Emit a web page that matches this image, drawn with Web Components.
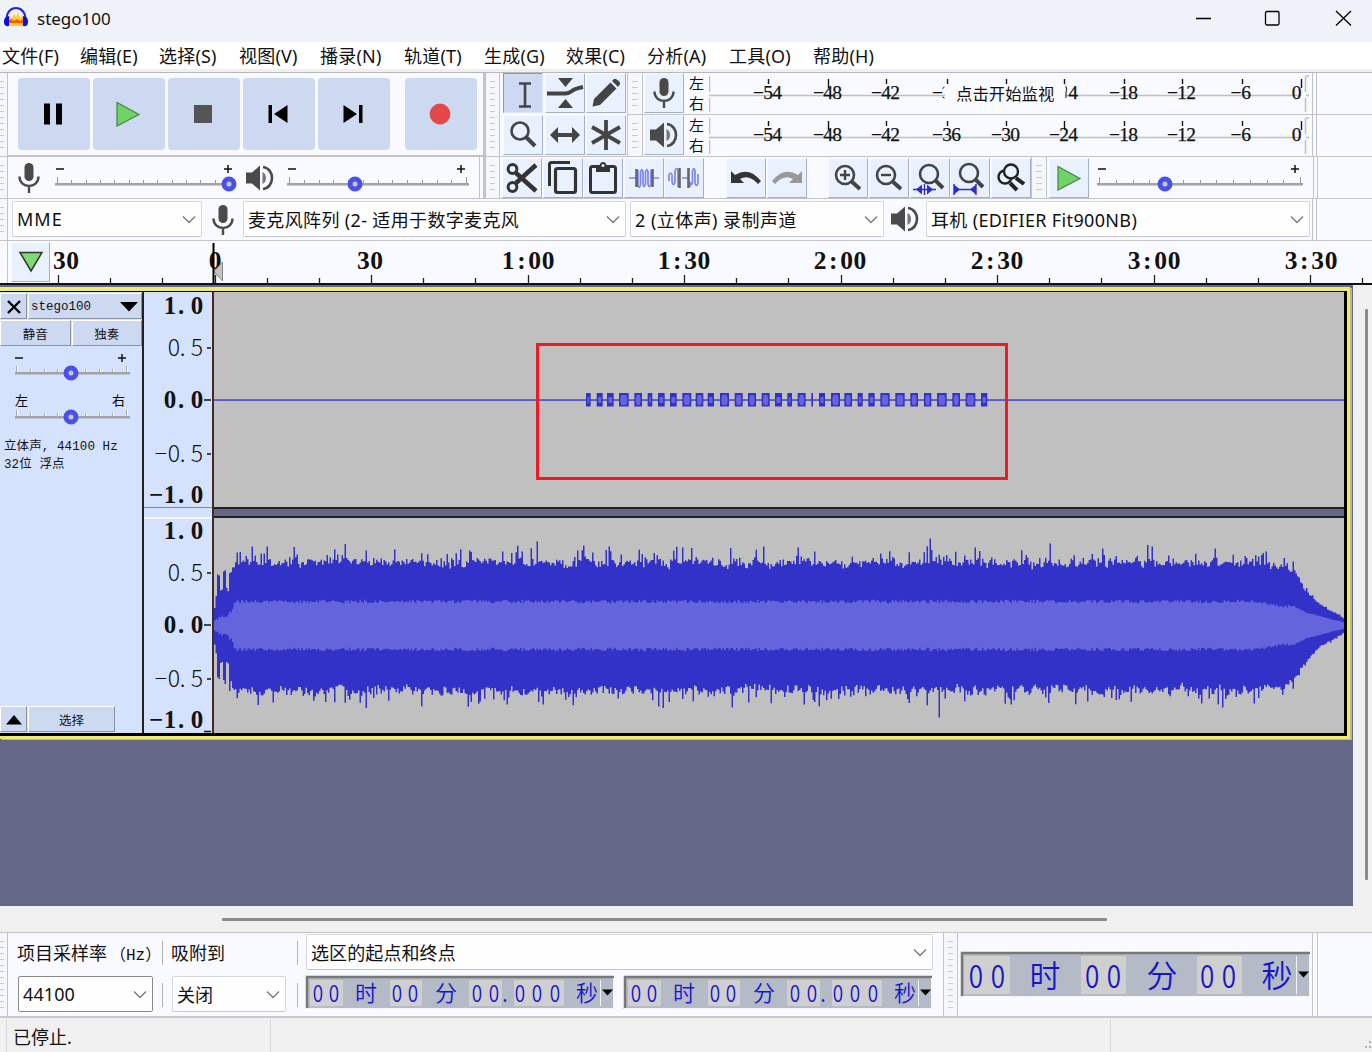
<!DOCTYPE html>
<html lang="zh-CN">
<head>
<meta charset="utf-8">
<title>stego100</title>
<style>
  html, body {
    margin: 0;
    width: 1372px;
    height: 1052px;
    overflow: hidden;
  }
  body {
    font-family: "Noto Sans", "Noto Sans CJK SC", sans-serif;
    font-size: 18px;
    color: #111;
  }
</style>
</head>
<body>
<audio-window></audio-window>

<script>
const SERIF = '"Liberation Serif", "Noto Sans CJK SC", serif';
const LIGHT = '"Noto Sans CJK SC", sans-serif';

// one x position per character, like a fixed-width bitmap font
function cells(text, xs, y, attrs = '') {
  return `<text x="${xs.join(' ')}" y="${y}" text-anchor="middle" ${attrs}>${text}</text>`;
}

function run(text, center, step) {
  const first = center - (text.length - 1) * step / 2;
  return [...text].map((c, i) => +(first + i * step).toFixed(1));
}

const lens = (x, y, r, tail) => `
  <circle cx="${x}" cy="${y}" r="${r}" fill="none" stroke="#444" stroke-width="2.6"/>
  <path d="M${x + r * 0.7} ${y + r * 0.7}L${tail}" stroke="#444" stroke-width="4"/>`;

const ICONS = {
  logo: [26, 24, `
    <path d="M5 20V13L7 10L9 13L11 7L13 11L15 6L17 12L19 9L21 13V20Z" fill="#fc3"/>
    <path d="M5 15L8 13L11 15L14 13L17 15L20 13V17H5Z" fill="#f50"/>
    <path d="M3.5 14C3 -2 23 -2 22.500 14" fill="none" stroke="#2222e8" stroke-width="2"/>
    <path d="M6 10V20C1 21 1 17 1 15Q1 11 6 10ZM20 10V20C25 21 25 17 25 15Q25 11 20 10Z" fill="#0a0aee"/>`],
  pause: [24, 24, '<path d="M3 1.500H9V22.500H3ZM15 1.500H21V22.500H15Z" fill="#000"/>'],
  play: [26, 26, '<path d="M2 1.500L24 13.500L2 25Z" fill="#6fd466" stroke="#4c7f49" stroke-width="1.200"/>'],
  stop: [20, 20, '<path d="M1 1H19V19H1Z" fill="#555"/>'],
  start: [22, 22, '<path d="M1.500 2H5V20H1.500ZM20.500 2V20L7 11Z" fill="#000"/>'],
  end: [22, 22, '<path d="M17 2H20.500V20H17ZM1.500 2V20L15 11Z" fill="#000"/>'],
  record: [22, 22, '<circle cx="11" cy="11" r="10.400" fill="#e34848"/>'],
  mic: [24, 32, `
    <rect x="7.500" y="1" width="9" height="18" rx="4.500" fill="#4a4a4a"/>
    <path d="M2.500 14.500C2.500 27 21.500 27 21.500 14.500M12 24V31" fill="none" stroke="#4a4a4a" stroke-width="2.400"/>`],
  speaker: [30, 28, `
    <path d="M1 8.500H7L15 1.500V26.500L7 19.500H1Z" fill="#4a4a4a"/>
    <path d="M17.500 8V20Q21 18.500 21 14T17.500 8Z" fill="#777"/>
    <path d="M18 3C30 4.500 30 23.500 18 25" fill="none" stroke="#4a4a4a" stroke-width="2.600"/>`],
  ibeam: [16, 28, '<path d="M2 2.500H14M2 25.500H14M8 2.500V25.500" fill="none" stroke="#444" stroke-width="2.600"/>'],
  envelope: [38, 32, `
    <path d="M12 1H27L19.500 10ZM12 31H27L19.500 22Z" fill="#444"/>
    <path d="M1 16.500H19Q23 16.500 26 14T37 10" fill="none" stroke="#444" stroke-width="4"/>`],
  pencil: [30, 30, '<path d="M1.500 28.500L3 21L19.500 4.500L25.500 10.500L9 27ZM21 3L23 1Q25 0 29 4.500Q29.500 6 27 9Z" fill="#444"/>'],
  lens: [28, 28, '<circle cx="11" cy="10" r="8.500" fill="none" stroke="#444" stroke-width="2.600"/><path d="M17 16L26 25" stroke="#444" stroke-width="4"/>'],
  shift: [32, 18, '<path d="M1 9L9 1V7H23V1L31 9L23 17V11H9V17Z" fill="#444"/>'],
  star: [32, 32, '<path d="M16 1V31M2 8L30 24M30 8L2 24" stroke="#444" stroke-width="3.800"/>'],
  cut: [32, 32, `
    <path d="M10 11L30 29M10 21L30 3" stroke="#333" stroke-width="4.500"/>
    <circle cx="6.500" cy="7" r="4.400" fill="none" stroke="#333" stroke-width="3"/>
    <circle cx="6.500" cy="25" r="4.400" fill="none" stroke="#333" stroke-width="3"/>`],
  copy: [32, 34, `
    <rect x="8.500" y="7.500" width="20" height="24" rx="2" fill="none" stroke="#333" stroke-width="3.200"/>
    <path d="M2.500 25V3.500Q2.500 1.500 4.500 1.500H23" fill="none" stroke="#333" stroke-width="3"/>`],
  paste: [30, 34, `
    <rect x="2.500" y="5.500" width="25" height="26" rx="2" fill="none" stroke="#333" stroke-width="3"/>
    <path d="M8 5H11.500Q12 1 15 1T18.500 5H22V11H8Z" fill="#333"/><circle cx="15" cy="4.500" r="1.500" fill="#eaf1fe"/>`],
  trim: [30, 22, `
    <path d="M0 11H7M24 11H30M9 3V19Q11 22 11.500 17V5Q13 0 14 5V17Q15 22 16.500 17V5Q18 0 19 5V17Q20 22 22 17V3" fill="none" stroke="#7d87ea" stroke-width="1.700"/>
    <path d="M7.500 2V20M23.500 2V20" stroke="#666" stroke-width="2.600"/>`],
  silence: [32, 24, `
    <path d="M1 15V9Q2.500 5 4 9V16Q5.500 21 7 16V5Q8.500 0 10 5V21M14 12H20M22 21V16Q23.500 21 24.500 16V5Q26 0 27 5V17Q28.500 22 30 17V8" fill="none" stroke="#7d87ea" stroke-width="1.700"/>
    <path d="M11.500 2V22M20.500 2V22" stroke="#666" stroke-width="2.600"/>`],
  undo: [32, 18, '<path d="M1 2L5 6Q19 -3 31 12L28 15Q19 5 10 10L14 14H1Z" fill="#333"/>'],
  redo: [32, 18, '<path d="M31 2L27 6Q13 -3 1 12L4 15Q13 5 22 10L18 14H31Z" fill="#999"/>'],
  zoomin: [30, 28, lens(12, 11, 9, '27 25') + '<path d="M7 11H17M12 6V16" stroke="#444" stroke-width="2.400"/>'],
  zoomout: [30, 28, lens(12, 11, 9, '27 25') + '<path d="M7 11H17" stroke="#444" stroke-width="2.400"/>'],
  zoomsel: [36, 34, lens(17, 13, 9, '31 27') + '<path d="M1 28.500H24M12.500 23V34" stroke="#2c2ccc" stroke-width="1.400"/><path d="M4 28.500L10 23.500V33.500ZM21 28.500L15 23.500V33.500Z" fill="#2c2ccc"/>'],
  zoomfit: [36, 34, lens(17, 12, 9, '31 26') + '<path d="M2 28.500H24M2 23V34M24 23V34" stroke="#2c2ccc" stroke-width="1.400"/><path d="M8 28.500L2 23.500V33.500ZM18 28.500L24 23.500V33.500Z" fill="#2c2ccc"/>'],
  zoomtoggle: [30, 30, `
    <path d="M14 20L21 27M20 15L28 21" stroke="#222" stroke-width="4"/>
    <circle cx="9" cy="14" r="6.500" fill="none" stroke="#222" stroke-width="2.400"/>
    <circle cx="15" cy="8.500" r="7" fill="#eaf1fe" stroke="#222" stroke-width="2.400"/>`],
  pin: [26, 22, '<path d="M2 1.500H24L13 20Z" fill="#7ddb70" stroke="#333" stroke-width="1.500"/>'],
  close: [16, 16, '<path d="M2 2L14 14M14 2L2 14" stroke="#000" stroke-width="2.400"/>'],
  down: [18, 10, '<path d="M0 0H18L9 9.500Z" fill="#000"/>'],
  up: [16, 10, '<path d="M0 9.500H16L8 0Z" fill="#000"/>'],
  chevron: [14, 9, '<path d="M1 1.500L7 7.500L13 1.500" fill="none" stroke="#777" stroke-width="1.300"/>'],
};

class AudioIcon extends HTMLElement {
  connectedCallback() {
    const [w, h, body] = ICONS[this.getAttribute('name')];
    this.attachShadow({ mode: 'open' }).innerHTML = `
      <style>
        :host { display: block; flex: none; width: ${w}px; height: ${h}px; }
        svg { display: block; }
      </style>
      <svg width="${w}" height="${h}" viewBox="0 0 ${w} ${h}">${body}</svg>`;
  }
}
customElements.define('audio-icon', AudioIcon);

class TitleBar extends HTMLElement {
  connectedCallback() {
    this.attachShadow({ mode: 'open' }).innerHTML = `
      <style>
        :host {
          display: flex;
          align-items: center;
          box-sizing: border-box;
          height: 42px;
          padding: 0 20px 6px 3px;
          background: #f0f2f9;
          font-size: 17px;
        }
        .name { margin-left: 8px; flex: 1; }
        svg { display: block; }
      </style>
      <audio-icon name="logo"></audio-icon>
      <span class="name"><slot></slot></span>
      <svg width="156" height="16" fill="none" stroke="#000" stroke-width="1.300">
        <path d="M0 8.500H15M140 1L155 15.500M155 1L140 15.500"/>
        <rect x="69.500" y="1.500" width="13.500" height="13.500" rx="1.500"/>
      </svg>`;
  }
}
customElements.define('title-bar', TitleBar);

class MenuBar extends HTMLElement {
  connectedCallback() {
    const items = ['文件(F)', '编辑(E)', '选择(S)', '视图(V)', '播录(N)', '轨道(T)',
      '生成(G)', '效果(C)', '分析(A)', '工具(O)', '帮助(H)'];
    this.attachShadow({ mode: 'open' }).innerHTML = `
      <style>
        :host {
          display: grid;
          grid-template-columns: 78px 79px 80px 81px 84px 80px 82px 81px 82px 84px 80px;
          height: 27px;
          padding-left: 2px;
          background: #fff;
          border-bottom: 3px solid #f0f0f0;
          line-height: 28px;
          letter-spacing: .2px;
          white-space: nowrap;
        }
      </style>
      ${items.map(t => `<span>${t}</span>`).join('')}`;
  }
}
customElements.define('menu-bar', MenuBar);

class ToolGrip extends HTMLElement {
  connectedCallback() {
    this.attachShadow({ mode: 'open' }).innerHTML = `
      <style>
        :host {
          display: block;
          flex: none;
          box-sizing: border-box;
          width: 14px;
          padding: 8px 4px;
          background: #f6f7fb;
          border-right: 1px solid #c4c4c4;
        }
        :host([edge]) { width: 8px; padding-left: 0; padding-right: 3px; }
        div {
          height: 100%;
          background: repeating-linear-gradient(#c8cacc 0 1px, transparent 1px 6px);
        }
      </style>
      <div></div>`;
  }
}
customElements.define('tool-grip', ToolGrip);

class ToolButton extends HTMLElement {
  connectedCallback() {
    this.attachShadow({ mode: 'open' }).innerHTML = `
      <style>
        :host {
          display: flex;
          flex: none;
          align-items: center;
          justify-content: center;
          box-sizing: border-box;
          width: 40px;
          height: 40px;
          background: #eaf1fe;
          border: 1px solid;
          border-color: #f9faff #a3b0c9 #a3b0c9 #f9faff;
        }
        :host([pressed]) {
          padding: 3px 0 0 3px;
          background: #cdd9f1;
          border-color: #8c98b0 #dce6f8 #dce6f8 #8c98b0;
        }
        :host([big]) {
          width: 72px;
          height: 72px;
          padding-right: 2px;
          border: 0;
          border-radius: 4px;
          background: #cdd9f1;
        }
        :host([flat]) { background: #cdd9f1; width: auto; height: 26px; padding-top: 1px; border-color: #fff #8a92a3 #8a92a3 #fff; }
      </style>
      <slot></slot>`;
  }
}
customElements.define('tool-button', ToolButton);

class ComboBox extends HTMLElement {
  connectedCallback() {
    this.attachShadow({ mode: 'open' }).innerHTML = `
      <style>
        :host {
          display: flex;
          flex: none;
          align-items: center;
          justify-content: space-between;
          box-sizing: border-box;
          height: 36px;
          padding: 0 5px 0 4px;
          background: #fefefe;
          border: 1px solid #d5d7dc;
          border-bottom-color: #c3c5ca;
          border-radius: 2px;
          letter-spacing: var(--combo-spacing, .35px);
          white-space: nowrap;
        }
        :host([focused]) { border-color: #8b8b8b; }
      </style>
      <span><slot></slot></span>
      <audio-icon name="chevron"></audio-icon>`;
  }
}
customElements.define('combo-box', ComboBox);

class LevelSlider extends HTMLElement {
  connectedCallback() {
    const w = +this.getAttribute('width');
    const pos = +this.getAttribute('pos');
    const n = +this.getAttribute('ticks') || 13;
    const plus = +this.getAttribute('plus') || w - 8;
    const compact = this.hasAttribute('compact');
    const ends = this.getAttribute('ends');
    const color = compact ? '#fff' : '#999';
    let ticks = '';
    for (let i = 0; i < n; i++) {
      const x = Math.round(2 + i * (w - 5) / (n - 1)) + 0.5;
      const top = i === 0 || i === n - 1 ? 13 : 16;
      ticks += `<path d="M${x} ${top}V20" stroke="${color}"/>`;
      if (compact) ticks += `<path d="M${x - 1} ${top}V20" stroke="#aaa"/>`;
    }
    const marks = ends
      ? `<text x="0" y="8" font-size="13">${ends[0]}</text><text x="${w - 18}" y="8" font-size="13">${ends[1]}</text>`
      : `<path d="M${compact ? 0 : 1} 5H${compact ? 8 : 9}M${plus - 4} 5H${plus + 4}M${plus} 1V9" stroke="#111" stroke-width="1.500"/>`;
    this.attachShadow({ mode: 'open' }).innerHTML = `
      <style>
        :host { display: block; flex: none; width: ${w}px; height: 30px; }
        svg { display: block; overflow: visible; }
      </style>
      <svg width="${w}" height="30">
        ${marks}${ticks}
        <rect y="19" width="${w}" height="2.500" fill="#a2a2a2"/>
        <circle cx="${pos}" cy="20" r="5" fill="#ccc8c0" stroke="#4a50ee" stroke-width="5"/>
      </svg>`;
  }
}
customElements.define('level-slider', LevelSlider);

class MeterRuler extends HTMLElement {
  connectedCallback() {
    const tip = this.hasAttribute('tip');
    const marks = [[-54, 59], [-48, 119], [-42, 177], [-36, 238], [-30, 297],
      [-24, 355], [-18, 415], [-12, 473], [-6, 533], [0, 592]];
    const labels = marks.map(([v, x]) => {
      const tall = v === -48 || v === 0 || v === -24;
      let text = String(v).replace('-', '−');
      let xs = v === 0 ? [x - 4.5] : v === -6 ? [x - 6, x + 4] : [x - 9.5, x, x + 9];
      // the hint box hides most of the scale between -36 and -24
      if (tip && v === -36) { text = '−'; xs = [x - 9.5]; }
      if (tip && v === -30) { text = ''; xs = []; }
      if (tip && v === -24) { text = '4'; xs = [x + 9]; }
      return `<path d="M${x + 0.5} 6V${tall ? 15 : 11}" stroke="#111" stroke-width="1.400"/>` +
        (text ? cells(text, xs, 26) : '');
    }).join('');
    const slivers = tip ? '<path d="M233.500 15.500L235.500 14M233.500 24L235.500 25M357 13.500Q358.500 16 357 19V25" stroke="#111" fill="none"/>' : '';
    this.attachShadow({ mode: 'open' }).innerHTML = `
      <style>
        :host { display: flex; flex: 1; position: relative; height: 41px; }
        .sides { width: 24px; font-size: 15px; line-height: 20px; padding: 0 0 0 4px; box-sizing: border-box; }
        svg { display: block; flex: none; }
        .tip {
          position: absolute;
          left: 260px;
          top: 11px;
          width: 120px;
          height: 21px;
          box-sizing: border-box;
          padding-left: 11px;
          background: #fafbff;
          font-size: 16.400px;
          line-height: 20px;
          white-space: nowrap;
        }
      </style>
      <div class="sides">左<br>右</div>
      <svg width="602" height="41" font-family='${SERIF}' font-size="19.500" fill="#111">
        <path d="M.5 3V19M.5 25V39M0 22.500H592M596.500 3V19M596.500 25V39M597 3H600M597 22.500H600" stroke="#c0c0c0" stroke-width="1.500" fill="none"/>
        <g stroke="#111" stroke-width=".25">${labels}</g>${slivers}
      </svg>
      ${tip ? '<div class="tip"><slot></slot></div>' : ''}`;
  }
}
customElements.define('meter-ruler', MeterRuler);

class TimeRuler extends HTMLElement {
  connectedCallback() {
    const labels = [['30', 66], ['0', 215], ['30', 370], ['1:00', 528], ['1:30', 684],
      ['2:00', 840], ['2:30', 997], ['3:00', 1154], ['3:30', 1311]];
    let ticks = '';
    for (let i = 0; i < 26; i++) {
      const x = Math.round(58 + i * 52.170) + 0.5;
      ticks += `M${x} ${i % 3 ? 37 : 34}V42`;
    }
    this.attachShadow({ mode: 'open' }).innerHTML = `
      <style>
        :host { display: flex; height: 42px; background: #f9faff; border-bottom: 2px solid #111; }
        .pin { width: 49px; box-sizing: border-box; padding: 1px 0 0 3px; border-left: 1px solid #c4c4c4; margin-left: 7px; }
        tool-button { width: 39px; }
        svg { display: block; margin-left: -56px; }
      </style>
      <div class="pin"><tool-button><audio-icon name="pin"></audio-icon></tool-button></div>
      <svg width="1372" height="42" font-family='${SERIF}' font-size="25.500" font-weight="bold" fill="#111">
        <path d="${ticks}" stroke="#222" stroke-width="1.300"/>
        ${labels.map(([t, x]) => cells(t, run(t, x, 13.300), 28)).join('')}
        <path d="M222.500 21V40L214 30.500Z" fill="#c4c4c4" stroke="#888"/>
        <path d="M213.500 2V42" stroke="#000" stroke-width="2"/>
      </svg>`;
  }
}
customElements.define('time-ruler', TimeRuler);

class TrackPanel extends HTMLElement {
  connectedCallback() {
    this.attachShadow({ mode: 'open' }).innerHTML = `
      <style>
        :host {
          display: flex;
          flex: none;
          flex-direction: column;
          box-sizing: border-box;
          width: 144px;
          padding-top: 1px;
          background: #d5e2fe;
          border-right: 2px solid #222;
          font-family: "Liberation Mono", "Noto Sans CJK SC", monospace;
          font-size: 12.500px;
        }
        .row { display: flex; gap: 1px; }
        .row > .wide { flex: 1; }
        .name { justify-content: space-between; padding: 2px 3px 0 2px; }
        .sliders { padding: 7px 0 0 15px; display: grid; row-gap: 14px; }
        p { margin: 11px 0 0 4px; line-height: 18px; white-space: pre; letter-spacing: .1px; }
        .foot { margin-top: auto; padding: 0 27px 1px 0; }
      </style>
      <div class="row">
        <tool-button flat style="width:27px"><audio-icon name="close"></audio-icon></tool-button>
        <tool-button flat class="wide name">stego100<audio-icon name="down"></audio-icon></tool-button>
      </div>
      <div class="row" style="margin-top:1px">
        <tool-button flat class="wide">静音</tool-button>
        <tool-button flat class="wide">独奏</tool-button>
      </div>
      <div class="sliders">
        <level-slider compact width="115" pos="56" ticks="9"></level-slider>
        <level-slider compact width="115" pos="56" ticks="9" ends="左右"></level-slider>
      </div>
      <p>立体声, 44100 Hz
32位 浮点</p>
      <div class="row foot">
        <tool-button flat style="width:27px"><audio-icon name="up"></audio-icon></tool-button>
        <tool-button flat class="wide">选择</tool-button>
      </div>`;
  }
}
customElements.define('track-panel', TrackPanel);

// vertical amplitude scale, both channels
class AmpRuler extends HTMLElement {
  connectedCallback() {
    const scale = [['1.0', 22, 0], ['0.5', 64, 56], ['0.0', 116, 108], ['−0.5', 170, 162], ['−1.0', 211, 0]];
    const draw = (dy) => scale.map(([t, y, tick]) => {
      const bold = t.endsWith('0');
      const xs = bold ? [26, 37, 53] : [30, 38.5, 53];
      if (t.length === 4) xs.unshift(bold ? 12 : 17);
      return cells(t, xs, y + dy, bold ? 'font-weight="bold"' : `font-family='${LIGHT}' font-size="23" font-weight="300"`) +
        (tick ? `<path d="M${bold ? 60 : 63} ${tick + dy}H67" stroke="#111" stroke-width="1.500"/>` : '');
    }).join('');
    this.attachShadow({ mode: 'open' }).innerHTML = `
      <style>
        :host { display: block; flex: none; width: 68px; background: #d5e2fe; }
        svg { display: block; }
      </style>
      <svg width="68" height="441" font-family='${SERIF}' font-size="25" fill="#111">
        <path d="M0 215.500H68" stroke="#888"/>
        <path d="M0 226H68" stroke="#fff" stroke-width="1.500"/>
        ${draw(0)}${draw(225)}
        <path d="M60 439.500H67" stroke="#111" stroke-width="1.500"/>
      </svg>`;
  }
}
customElements.define('amp-ruler', AmpRuler);

// start/end of each tone, in thirds of a pixel
const TONES = [[48, 62], [80, 98], [111, 131], [147, 176], [193, 216], [233, 247], [264, 284], [300, 320],
  [337, 364], [377, 400], [413, 432], [450, 477], [494, 518], [534, 558], [575, 599], [615, 636], [652, 666],
  [683, 707], [724, 729], [747, 765], [783, 810], [823, 846], [863, 878], [895, 914], [931, 959], [976, 1004],
  [1021, 1044], [1062, 1084], [1101, 1130], [1147, 1170], [1187, 1216], [1233, 1252]];

class ToneWave extends HTMLElement {
  connectedCallback() {
    const blocks = TONES.map(([a, b]) => {
      const x = 356 + a / 3, w = (b - a) / 3;
      const inner = w > 4 ? `<rect x="${x + 1.5}" y="105" width="${w - 3}" height="6" fill="#6464dc"/>` : '';
      const mid = w > 7 ? `<rect x="${x + 2}" y="103" width="${w - 4}" height="10" fill="#6464dc"/>` : '';
      return `<rect x="${x}" y="101" width="${w}" height="13.500" fill="#3232c8"/>${inner}${mid}`;
    }).join('');
    this.attachShadow({ mode: 'open' }).innerHTML = `
      <style>
        :host { display: block; height: 215px; background: #c0c0c0; border-bottom: 2px solid #222; }
        svg { display: block; }
      </style>
      <svg width="1130" height="215">
        <rect y="107.200" width="1130" height="1.700" fill="#5050c8"/>
        ${blocks}
      </svg>`;
  }
}
customElements.define('tone-wave', ToneWave);

class NoiseWave extends HTMLElement {
  // linear interpolation through [x, y] stops
  static lerp(stops, x) {
    for (let i = 1; i < stops.length; i++) {
      if (x <= stops[i][0]) {
        const [x0, y0] = stops[i - 1], [x1, y1] = stops[i];
        return y0 + (y1 - y0) * (x - x0) / (x1 - x0);
      }
    }
    return stops[stops.length - 1][1];
  }

  connectedCallback() {
    const peak = [[0, 18], [2, 50], [12, 53], [17, 54], [20, 63], [1030, 62], [1062, 58], [1079, 54], [1090, 36],
      [1100, 26], [1108, 19], [1120, 13], [1130, 7]];
    const rms = [[0, 5], [4, 8], [12, 10], [18, 15], [20, 24], [1040, 24], [1080, 18], [1092, 13], [1110, 8], [1130, 3]];
    const top = { 22: 73, 53: 79, 151: 75, 322: 84, 369: 80, 549: 79, 584: 78, 716: 87, 760: 78, 835: 82, 938: 79, 1001: 77, 1079: 64 };
    const low = { 59: 77, 266: 76, 444: 81, 517: 82, 724: 92, 796: 79, 1008: 82 };
    let seed = 71;
    const rnd = () => (seed = (seed * 16807) % 2147483647) / 2147483647;
    const mid = 107.5;
    const up = [], down = [], rup = [], rdown = [];
    let drift = 0, sink = 0;
    for (let x = 0; x < 1130; x += 1.5) {
      const p = NoiseWave.lerp(peak, x), r = NoiseWave.lerp(rms, x);
      const k = p / 62 * (x > 1080 ? 0.5 : 1);
      drift = drift * 0.4 + (rnd() - 0.5) * 6;
      sink = sink * 0.4 + (rnd() - 0.5) * 6;
      const spike = () => (rnd() - 0.45) * 6 * k + (rnd() > 0.82 ? rnd() * 15 * k : 0);
      let a = p + drift * k + spike(), b = p + 2 * k + sink * k + spike();
      for (const t in top) if (Math.abs(x - t) < 0.8) a = top[t];
      for (const t in low) if (Math.abs(x - t) < 0.8) b = low[t];
      if (x < 14 && rnd() > 0.5) { a *= 0.6; b *= 0.65; }
      const j = (rnd() - 0.5) * 3.500 * k;
      up.push(`L${x} ${(mid - a).toFixed(1)}h1.500`);
      down.unshift(`L${x + 1.5} ${(mid + b).toFixed(1)}h-1.500`);
      rup.push(`L${x} ${(mid - r - j).toFixed(1)}h1.500`);
      rdown.unshift(`L${x + 1.5} ${(mid + r + j).toFixed(1)}h-1.500`);
    }
    this.attachShadow({ mode: 'open' }).innerHTML = `
      <style>
        :host { display: block; height: 215px; background: #c0c0c0; border-top: 2px solid #222; }
        svg { display: block; }
      </style>
      <svg width="1130" height="215">
        <path d="M0 ${mid}${up.join('')}${down.join('')}Z" fill="#3232c8"/>
        <path d="M0 ${mid}${rup.join('')}${rdown.join('')}Z" fill="#6464dc"/>
      </svg>`;
  }
}
customElements.define('noise-wave', NoiseWave);

class TrackView extends HTMLElement {
  connectedCallback() {
    this.attachShadow({ mode: 'open' }).innerHTML = `
      <style>
        :host { display: flex; position: relative; height: 621px; background: #f0f0f0; }
        .canvas { width: 1353px; background: #656886; box-sizing: border-box; padding-top: 2px; }
        .frame {
          width: 1347px;
          border: solid #eeeb73;
          border-width: 4px 3px 3px 0;
          box-shadow: 2px 1px #bdbb80;
        }
        .track { display: flex; height: 441px; border: solid #000; border-width: 1px 3px 3px 0; }
        .waves { flex: 1; display: flex; flex-direction: column; justify-content: space-between; background: #656886; border-left: 2px solid #432828; }
        .bar { width: 3px; height: 571px; margin: 24px 0 0 12px; background: #8b8b8b; border-radius: 1px; }
        .mark {
          position: absolute;
          left: 536px;
          top: 58px;
          box-sizing: border-box;
          width: 472px;
          height: 137px;
          border: 3px solid #ed1c24;
        }
      </style>
      <div class="canvas">
        <div class="frame">
          <div class="track">
            <track-panel></track-panel>
            <amp-ruler></amp-ruler>
            <div class="waves"><tone-wave></tone-wave><noise-wave></noise-wave></div>
          </div>
        </div>
      </div>
      <div class="bar"></div>
      <div class="mark"></div>`;
  }
}
customElements.define('track-view', TrackView);

class TimeControl extends HTMLElement {
  connectedCallback() {
    const big = this.hasAttribute('big');
    const w = big ? 349 : 308, h = big ? 45 : 33;
    const boxes = big ? [[3, 46], [120, 45], [236, 45]] : [[4, 33], [84, 32], [163, 33], [208, 50]];
    const groups = big
      ? [['00', [15, 37]], ['时', [84]], ['00', [131, 153]], ['分', [201]], ['00', [246, 268]], ['秒', [316]]]
      : [['00', [12, 28]], ['时', [60]], ['00', [91, 107]], ['分', [140]], ['00.000', [171, 188, 199, 214, 231, 249]], ['秒', [281]]];
    const base = big ? 36 : 26;
    // digits are narrower than the font's own, so they are squeezed around their centres
    const glyphs = groups.map(([t, xs]) => t > '9'
      ? cells(t, xs, base - 1, `font-size="${big ? 31 : 22}"`)
      : `<g transform="scale(.84 1)">${cells(t, xs.map(x => +(x / 0.84).toFixed(1)), base)}</g>`).join('');
    this.attachShadow({ mode: 'open' }).innerHTML = `
      <style>
        :host { display: block; flex: none; width: ${w}px; height: ${h}px; }
        svg { display: block; overflow: visible; }
      </style>
      <svg width="${w}" height="${h}" font-family='${LIGHT}' font-size="${big ? 31 : 22.5}" font-weight="350" fill="#1414cc">
        <rect width="${w}" height="${h}" fill="#b4bac6"/>
        ${boxes.map(([x, bw]) => `<rect x="${x}" y="4" width="${bw}" height="${h - 7}" fill="#cfcfcf"/>`).join('')}
        <path d="M1 ${h}V1H${w}" fill="none" stroke="#777" stroke-width="2.500"/>
        <path d="M0 ${h - 0.5}H${w - 0.5}V2M${w - 13.5} 4V${h - 3}" fill="none" stroke="#f4f4f4"/>
        ${glyphs}
        <path d="M${w - 12} ${h / 2 - 3}h11l-5.500 6z" fill="#000"/>
      </svg>`;
  }
}
customElements.define('time-control', TimeControl);

class SelectionBar extends HTMLElement {
  connectedCallback() {
    this.attachShadow({ mode: 'open' }).innerHTML = `
      <style>
        :host {
          --combo-spacing: .1px;
          display: flex;
          height: 83px;
          background: #f9faff;
          border-top: 1px solid #c4c4c4;
          border-bottom: 2px solid #c8c8c8;
          white-space: nowrap;
        }
        .grid {
          display: grid;
          grid-template: 42px 41px / 144px 10px 125px 9px 637px;
          padding-left: 10px;
          width: 925px;
        }
        .grid > * { align-self: start; }
        .label { line-height: 40px; margin-left: -1px; }
        .hz { font: 16px "Liberation Mono", "Noto Sans CJK SC", monospace; margin-left: 3px; }
        .sep { width: 1px; height: 24px; margin-top: 8px; background: #b4b4b4; }
        .times { display: flex; gap: 10px; padding-top: 1px; }
        combo-box { margin-top: 1px; }
        .end { width: 4px; margin-left: 2px; border: solid #c8c8c8; border-width: 0 1px; }
      </style>
      <tool-grip edge></tool-grip>
      <div class="grid">
        <span class="label">项目采样率<span class="hz">（Hz）</span></span>
        <i class="sep"></i>
        <span class="label">吸附到</span>
        <i class="sep"></i>
        <combo-box style="width:627px">选区的起点和终点</combo-box>
        <combo-box focused style="width:135px">44100</combo-box>
        <i class="sep"></i>
        <combo-box style="width:114px">关闭</combo-box>
        <i class="sep"></i>
        <div class="times"><time-control></time-control><time-control></time-control></div>
      </div>
      <tool-grip style="border-left:1px solid #c4c4c4;width:15px"></tool-grip>
      <time-control big style="margin:19px 0 0 3px"></time-control>
      <div class="end"></div>`;
  }
}
customElements.define('selection-bar', SelectionBar);

class StatusBar extends HTMLElement {
  connectedCallback() {
    this.attachShadow({ mode: 'open' }).innerHTML = `
      <style>
        :host { display: flex; align-items: stretch; height: 34px; background: #f0f0f0; padding: 1px 0 0 6px; line-height: 36px; box-sizing: border-box; }
        div { flex: none; border-left: 1px solid #d8d8d8; box-sizing: border-box; padding-left: 6px; }
        svg { display: block; margin: 22px 0 0 250px; }
      </style>
      <div style="width:264px"><slot></slot></div>
      <div style="width:840px"></div>
      <div style="padding:0"><svg width="11" height="12" fill="#b0b0b0"><path d="M8 0h2v2h-2zM4 5h2v2h-2zM8 5h2v2h-2z"/></svg></div>`;
  }
}
customElements.define('status-bar', StatusBar);

class AudioWindow extends HTMLElement {
  connectedCallback() {
    const btn = (name, attrs = '') => `<tool-button ${attrs}><audio-icon name="${name}"></audio-icon></tool-button>`;
    this.attachShadow({ mode: 'open' }).innerHTML = `
      <style>
        :host { display: block; width: 1372px; height: 1052px; background: #f9faff; }
        .dock { display: flex; box-sizing: border-box; height: 42px; border-bottom: 1px solid #c4c4c4; }
        .dock.tall { height: 85px; border-top: 1px solid #b8b8b8; }
        .edge { width: 3px; background: #c2c2c2; flex: none; }
        .transport { display: flex; box-sizing: border-box; width: 475px; padding: 5px 0 0 10px; gap: 3px; border-bottom: 1px solid #c2c2c2; }
        .tools { display: grid; grid-template: 40px 40px / 40px 40px 40px; gap: 2px 1.500px; padding: 0 1px 0 3px; }
        .meters { flex: 1; display: grid; grid-template-rows: 42px 41px; }
        .meter { display: flex; width: 686px; box-sizing: border-box; border-right: 1px solid #c4c4c4; }
        .meter tool-grip { border-left: 1px solid #c4c4c4; width: 16px; margin-right: 1px; }
        .meters > div { display: flex; }
        .meters > div:first-child { border-bottom: 1px solid #c4c4c4; }
        .meter tool-button { margin-right: 1px; }
        .end { width: 4px; box-sizing: border-box; border-right: 1px solid #c4c4c4; }
        .mixer { display: flex; box-sizing: border-box; width: 472px; padding: 5px 0 0 9px; border-right: 1px solid #c4c4c4; margin-right: 3px; }
        .edit { display: flex; gap: .6px; padding: 1px 0 0 2px; }
        .gap { width: 20.500px; }
        .speed { display: flex; box-sizing: border-box; width: 267px; padding: 1px 0 0 2px; border-right: 1px solid #c4c4c4; }
        .device { display: flex; box-sizing: border-box; width: 1305px; padding: 2px 0 0 4px; border-right: 1px solid #c4c4c4; }
        .hscroll { height: 26px; background: #f0f0f0; padding: 12px 0 0 222px; box-sizing: border-box; }
        .hscroll div { width: 885px; height: 3px; background: #8b8b8b; border-radius: 1px; }
      </style>
      <title-bar>stego100</title-bar>
      <menu-bar></menu-bar>
      <div class="dock tall">
        <tool-grip edge></tool-grip>
        <div class="transport">
          ${btn('pause', 'big')}${btn('play', 'big')}${btn('stop', 'big')}${btn('start', 'big')}${btn('end', 'big')}
          ${btn('record', 'big style="margin-left:12px"')}
        </div>
        <div class="edge"></div>
        <tool-grip></tool-grip>
        <div class="tools">
          ${btn('ibeam', 'pressed')}${btn('envelope')}${btn('pencil')}${btn('lens')}${btn('shift')}${btn('star')}
        </div>
        <div class="meters">
          <div><div class="meter"><tool-grip></tool-grip>${btn('mic')}<meter-ruler tip>点击开始监视</meter-ruler></div><div class="end"></div></div>
          <div><div class="meter"><tool-grip></tool-grip>${btn('speaker')}<meter-ruler></meter-ruler></div><div class="end"></div></div>
        </div>
      </div>
      <div class="dock">
        <tool-grip edge></tool-grip>
        <div class="mixer">
          <audio-icon name="mic"></audio-icon>
          <level-slider width="177" pos="174" plus="173" style="margin:2px 0 0 14px"></level-slider>
          <audio-icon name="speaker" style="margin:2px 0 0 13px"></audio-icon>
          <level-slider width="182" pos="68" style="margin:2px 0 0 12px"></level-slider>
        </div>
        <div class="edge"></div>
        <tool-grip></tool-grip>
        <div class="edit">
          ${btn('cut')}${btn('copy')}${btn('paste')}${btn('trim')}${btn('silence')}<i class="gap"></i>
          ${btn('undo')}${btn('redo')}<i class="gap"></i>
          ${btn('zoomin')}${btn('zoomout')}${btn('zoomsel')}${btn('zoomfit')}${btn('zoomtoggle')}
        </div>
        <tool-grip style="border-left:1px solid #c4c4c4;width:16px"></tool-grip>
        <div class="speed">
          ${btn('play')}
          <level-slider width="206" pos="68" style="margin:6px 0 0 8px"></level-slider>
        </div>
        <div class="end"></div>
      </div>
      <div class="dock">
        <tool-grip edge></tool-grip>
        <div class="device">
          <combo-box style="width:190px;--combo-spacing:1px">MME</combo-box>
          <audio-icon name="mic" style="margin:3px 8px 0 9px"></audio-icon>
          <combo-box style="width:383px">麦克风阵列 (2- 适用于数字麦克风</combo-box>
          <combo-box style="width:254px;margin-left:4px;--combo-spacing:.45px">2 (立体声) 录制声道</combo-box>
          <audio-icon name="speaker" style="margin:4px 6px 0"></audio-icon>
          <combo-box style="width:384px">耳机 (EDIFIER Fit900NB)</combo-box>
        </div>
        <div class="end"></div>
      </div>
      <time-ruler></time-ruler>
      <track-view></track-view>
      <div class="hscroll"><div></div></div>
      <selection-bar></selection-bar>
      <status-bar>已停止.</status-bar>`;
  }
}
customElements.define('audio-window', AudioWindow);
</script>
</body>
</html>
